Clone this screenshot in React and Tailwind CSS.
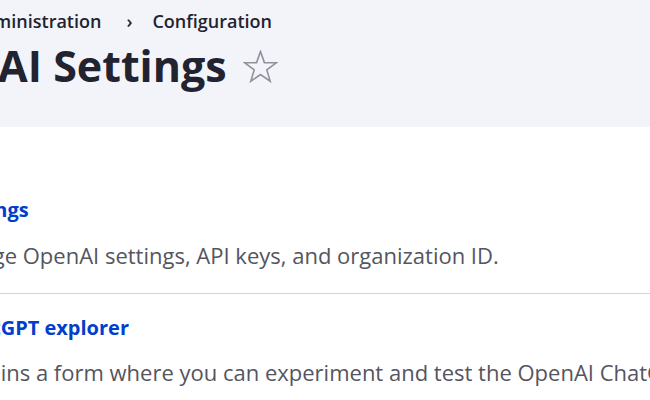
import React from 'react';

const StarIcon = () => (
  <svg width="35" height="34" viewBox="0 0 35 34" fill="none" stroke="#8e929c" strokeWidth="1.6" strokeLinejoin="miter">
    <polygon points="17.5,1.5 21.4,12.6 33.2,12.8 23.8,19.9 27.2,31.2 17.5,24.5 7.8,31.2 11.2,19.9 1.8,12.8 13.6,12.6" />
  </svg>
);

const items = [
  {
    title: 'Settings',
    clip: '-ml-[52px]',
    description: 'Manage OpenAI settings, API keys, and organization ID.',
    descClip: '-ml-[65px]',
    spacing: 'pb-[23px]',
    descGap: 'mt-[16px]',
  },
  {
    title: 'ChatGPT explorer',
    clip: '-ml-[46px]',
    description: 'Contains a form where you can experiment and test the OpenAI ChatGPT API.',
    descClip: '-ml-[60px]',
    spacing: 'border-t border-[#d3d4d9] pt-[20px]',
    descGap: 'mt-[15px]',
  },
];

export default function App() {
  return (
    <div className="w-[650px] h-[400px] overflow-hidden bg-white text-[#222330] font-['Open_Sans',sans-serif]">
      <div className="h-[127px] bg-[#f3f4f9] pt-[9px] overflow-hidden">
        <nav className="flex items-center whitespace-nowrap text-[18px] leading-[24px] font-semibold -ml-[29px]">
          <span>Administration</span>
          <span className="ml-[25px] mr-[20px]">›</span>
          <span>Configuration</span>
        </nav>
        <div className="flex items-center mt-[5px] -ml-[117px] whitespace-nowrap">
          <h1 className="text-[43px] leading-[56px] font-bold">OpenAI Settings</h1>
          <span className="ml-[16px] mt-[2px]">
            <StarIcon />
          </span>
        </div>
      </div>

      <ul className="pt-[69px]">
        {items.map((item) => (
          <li key={item.title} className={item.spacing}>
            <a className={`block whitespace-nowrap text-[20px] leading-[28px] font-bold text-[#003ecc] ${item.clip}`} href="#">
              {item.title}
            </a>
            <p className={`${item.descGap} whitespace-nowrap text-[22px] leading-[30px] text-[#545560] ${item.descClip}`}>
              {item.description}
            </p>
          </li>
        ))}
      </ul>
    </div>
  );
}
